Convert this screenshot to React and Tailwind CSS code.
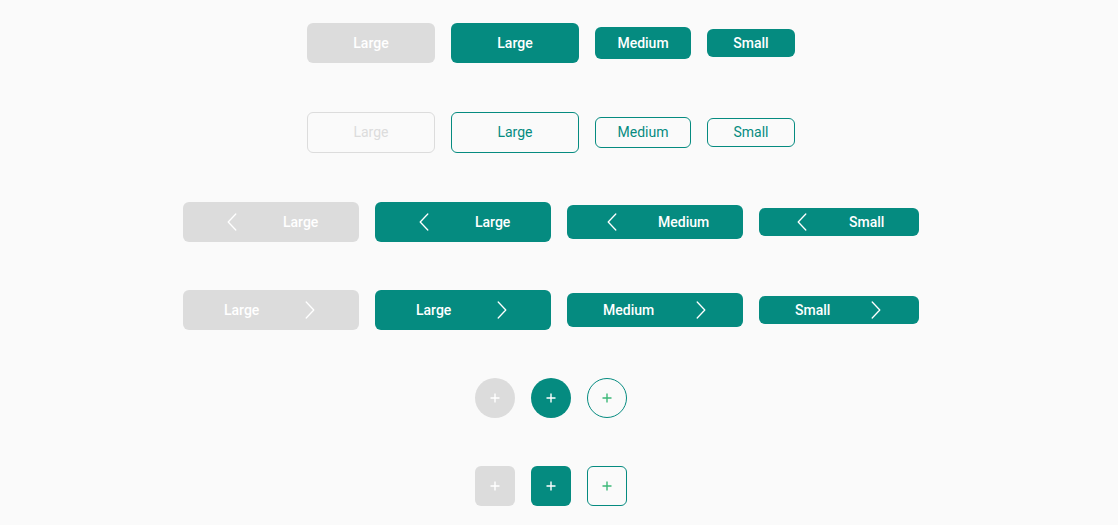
import React from "react";

const TEAL = "bg-[#058b80]";

function ChevronLeft() {
  return (
    <svg width="10" height="18" viewBox="0 0 10 18" fill="none" className="shrink-0">
      <path d="M8.8 1 L1.2 9 L8.8 17" stroke="currentColor" strokeWidth="1.3" strokeLinecap="round" strokeLinejoin="round" />
    </svg>
  );
}
function ChevronRight() {
  return (
    <svg width="10" height="18" viewBox="0 0 10 18" fill="none" className="shrink-0">
      <path d="M1.2 1 L8.8 9 L1.2 17" stroke="currentColor" strokeWidth="1.3" strokeLinecap="round" strokeLinejoin="round" />
    </svg>
  );
}
function Plus({ className }) {
  return (
    <svg width="10" height="10" viewBox="0 0 10 10" fill="none" className={className}>
      <path d="M5 0.5 V9.5 M0.5 5 H9.5" stroke="currentColor" strokeWidth="1.4" />
    </svg>
  );
}

export default function App() {
  return (
    <div className="min-h-[525px] w-full bg-[#fafafa]" style={{ fontFamily: "Roboto, 'Liberation Sans', sans-serif" }}>
      <div className="w-[1102px] flex flex-col items-center pt-[23px] text-[14px]">
        {/* Row 1 */}
        <div className="flex items-center gap-4">
          <div className="w-32 h-10 rounded-md bg-[#dcdcdc] text-white font-medium flex items-center justify-center">Large</div>
          <div className={`w-32 h-10 rounded-md ${TEAL} text-white font-medium flex items-center justify-center`}>Large</div>
          <div className={`w-24 h-8 rounded-md ${TEAL} text-white font-medium flex items-center justify-center`}>Medium</div>
          <div className={`w-[88px] h-7 rounded-md ${TEAL} text-white font-medium flex items-center justify-center`}>Small</div>
        </div>
        {/* Row 2 */}
        <div className="flex items-center gap-4 mt-[49px]">
          <div className="w-32 h-[41px] rounded-md border border-[#dcdcdc] text-[#dcdcdc] flex items-center justify-center">Large</div>
          <div className="w-32 h-[41px] rounded-md border border-[#058b80] text-[#058b80] flex items-center justify-center">Large</div>
          <div className="w-24 h-[31px] rounded-md border border-[#058b80] text-[#058b80] flex items-center justify-center">Medium</div>
          <div className="w-[88px] h-[29px] rounded-md border border-[#058b80] text-[#058b80] flex items-center justify-center">Small</div>
        </div>
        {/* Row 3 */}
        <div className="flex items-center gap-4 mt-[49px]">
          <div className="w-44 h-10 rounded-md bg-[#dcdcdc] text-white font-medium flex items-center pl-11 gap-[46px]"><ChevronLeft /><span>Large</span></div>
          <div className={`w-44 h-10 rounded-md ${TEAL} text-white font-medium flex items-center pl-11 gap-[46px]`}><ChevronLeft /><span>Large</span></div>
          <div className={`w-44 h-[34px] rounded-md ${TEAL} text-white font-medium flex items-center pl-10 gap-[41px]`}><ChevronLeft /><span>Medium</span></div>
          <div className={`w-40 h-7 rounded-md ${TEAL} text-white font-medium flex items-center pl-[38px] gap-[42px]`}><ChevronLeft /><span>Small</span></div>
        </div>
        {/* Row 4 */}
        <div className="flex items-center gap-4 mt-12">
          <div className="w-44 h-10 rounded-md bg-[#dcdcdc] text-white font-medium flex items-center pl-[41px] gap-[46px]"><span>Large</span><ChevronRight /></div>
          <div className={`w-44 h-10 rounded-md ${TEAL} text-white font-medium flex items-center pl-[41px] gap-[46px]`}><span>Large</span><ChevronRight /></div>
          <div className={`w-44 h-[34px] rounded-md ${TEAL} text-white font-medium flex items-center pl-9 gap-[42px]`}><span>Medium</span><ChevronRight /></div>
          <div className={`w-40 h-7 rounded-md ${TEAL} text-white font-medium flex items-center pl-9 gap-[41px]`}><span>Small</span><ChevronRight /></div>
        </div>
        {/* Row 5 */}
        <div className="flex items-center gap-4 mt-12">
          <div className="w-10 h-10 rounded-full bg-[#dcdcdc] text-white flex items-center justify-center"><Plus /></div>
          <div className={`w-10 h-10 rounded-full ${TEAL} text-white flex items-center justify-center`}><Plus /></div>
          <div className="w-10 h-10 rounded-full border border-[#058b80] text-[#3cb878] flex items-center justify-center"><Plus /></div>
        </div>
        {/* Row 6 */}
        <div className="flex items-center gap-4 mt-12">
          <div className="w-10 h-10 rounded-md bg-[#dcdcdc] text-white flex items-center justify-center"><Plus /></div>
          <div className={`w-10 h-10 rounded-md ${TEAL} text-white flex items-center justify-center`}><Plus /></div>
          <div className="w-10 h-10 rounded-md border border-[#058b80] text-[#3cb878] flex items-center justify-center"><Plus /></div>
        </div>
      </div>
    </div>
  );
}
